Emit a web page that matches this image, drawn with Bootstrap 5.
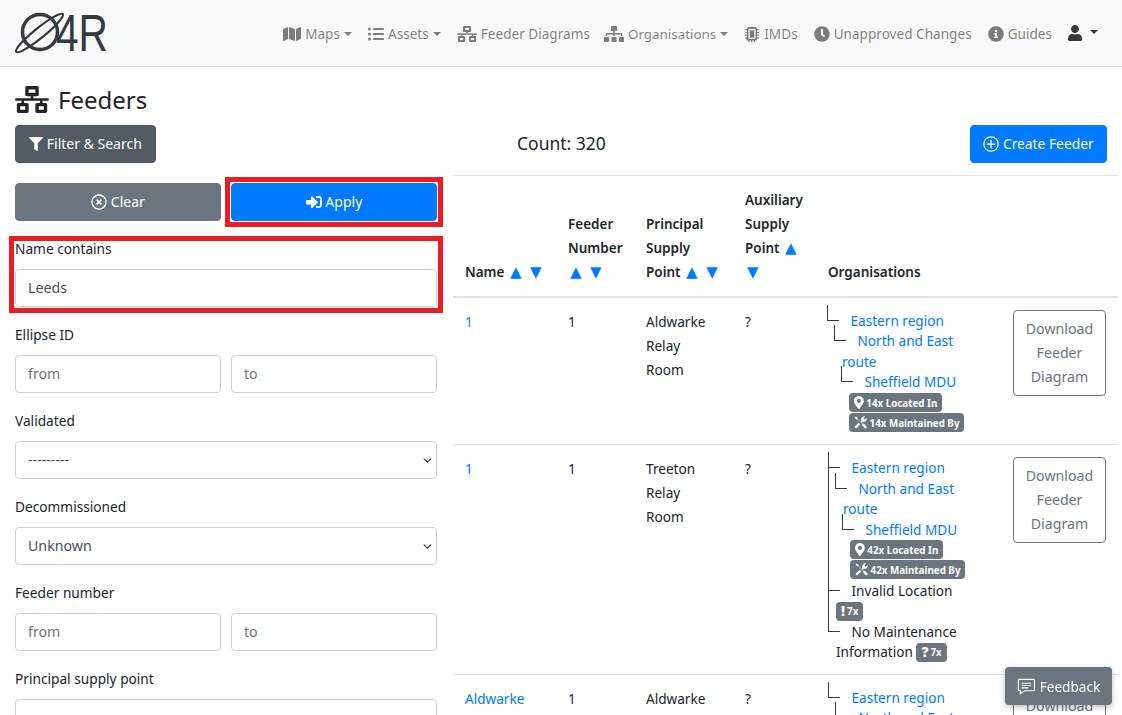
<!DOCTYPE html>
<html lang="en">
<head>
<meta charset="utf-8">
<title>Feeders</title>
<link href="https://cdn.jsdelivr.net/npm/bootstrap@5.3.0/dist/css/bootstrap.min.css" rel="stylesheet">
<style>
html,body{height:100vh;overflow:hidden}
body{font-family:"Noto Sans",sans-serif;font-size:14.4px;line-height:24px;color:#212529}
svg.ic{height:16px;width:auto;fill:currentColor;vertical-align:-3px}
.top-bar{height:67px;background:#f8f9fa;border-bottom:1px solid #dee2e6;padding:0 15px}
.top-link{color:rgba(0,0,0,.5);text-decoration:none;padding:1px 8px 0;white-space:nowrap;display:flex;align-items:center;gap:4px;font-size:13.6px}
.top-link.org-link{font-size:13.4px;padding-left:6px}
.top-link.dropdown-toggle::after{border-top-width:4px;border-left-width:4px;border-right-width:4px;margin-left:0;vertical-align:.255em}
.top-user{color:#343a40;padding:0 9px 0 8px;text-decoration:none;display:flex;align-items:center;gap:8px}
.top-user svg{height:16px;fill:currentColor}
.top-user.dropdown-toggle::after{margin-left:0;border-top-width:4px;border-left-width:4px;border-right-width:4px;margin-bottom:3px}
.page-title{font-size:24px;line-height:29px;font-weight:400;margin:0;padding:18px 15px 11px;gap:9px}
.page-title svg{height:27px;width:34px;fill:#212529}
.side{width:452px;flex:none;padding:0 15px}
.main{flex:1 1 auto;margin-left:1px;padding-right:4px;min-width:0}
.act-btn{height:38px;padding:0;font-size:14px;line-height:36px;border-radius:4px}
.act-dark{background:#545b62;border-color:#4e555b;color:#fff;width:141px}
.act-dark svg.ic{height:14px;vertical-align:-2px}
.act-blue{background:#007bff;border-color:#007bff;color:#fff}
.act-grey{background:#6c757d;border-color:#6c757d;color:#fff}
.act-create{width:137px;margin-right:11px;font-size:13.8px}
.count-text{font-size:17.5px;margin-left:64px;margin-bottom:2px}
.head-line{height:38px;margin-bottom:12px}
.btn-line{gap:10px;margin:20px 0 16px;height:38px}
.btn-line>*{flex:0 0 206px}
.red-wrap{position:relative}
.red-box{position:absolute;border:5px solid #ed1c24;pointer-events:none}
.red-apply{left:-6px;right:-6px;top:-6px;bottom:-6px}
.red-name{left:-6px;right:-6px;top:-1px;bottom:-6px}
.fld{margin-bottom:16px}
.fld label{display:block;margin-bottom:8px;font-size:13.7px}
.fld .form-control,.fld .form-select{height:38px;font-size:14.2px;border-radius:4px;border-color:#ced4da;color:#495057;padding:6px 12px}
.fld .form-control{padding:5px 12px 7px}
.fld .form-select{background-position:right 3px center;background-size:11px 9px}
.fld .form-control::placeholder{color:#6c757d}
.pair{gap:10px}
.feed-table{table-layout:fixed;width:100%;margin:0;border-top:1px solid #dee2e6;font-size:13.6px;line-height:24px}
.feed-table th,.feed-table td{padding:12px;vertical-align:top;border-bottom:1px solid #dee2e6;border-top:0}
.feed-table thead th{vertical-align:bottom;border-bottom:2px solid #dee2e6;font-weight:600;font-size:13.5px}
.feed-table a.nm{color:#007bff;text-decoration:none}
.sort{color:#007bff;font-size:15px;line-height:1;margin-left:2px;font-family:"DejaVu Sans",sans-serif}
.sort.sd{margin-left:5px}
.dl-btn{width:93px;height:86px;padding:6px 0;border:1px solid #6c757d;color:#6c757d;background:#fff;font-size:14.2px;line-height:24px;border-radius:4px;text-align:center}
.org-tree,.org-tree ul{list-style:none;margin:0;padding:0}
.org-tree{padding-left:8px;line-height:20.4px;font-size:13.6px;margin-top:1px}
.org-tree.t1{margin-left:-1px;margin-bottom:-1px}
.org-tree.t2{margin-bottom:-1px}
.org-tree ul{padding-left:7px}
.org-tree li{position:relative}
.org-tree li::before{content:"";position:absolute;left:-8px;top:-6px;width:12px;height:16px;border-left:1px solid #343a40;border-bottom:1px solid #343a40}
.org-tree li.more::after{content:"";position:absolute;left:-8px;top:8px;bottom:-8px;border-left:1px solid #343a40}
.gap-in{display:inline-block;width:15.5px}
.org-tree a{color:#007bff;text-decoration:none}
.tag{display:inline-block;height:19px;margin:-4px 0;background:#6c757d;color:#fff;font-size:9.8px;font-weight:700;line-height:12px;padding:3px 5px 4px;border-radius:4px;white-space:nowrap;vertical-align:1px}
.tag svg{height:13px;width:auto;fill:#fff;vertical-align:-2px}
.tag b{font-size:14px;line-height:12px;vertical-align:-1px;margin-right:2px}
.feed-fix{position:fixed;right:10px;bottom:10px;width:107px;height:38px;padding-top:1px;background:#6c757d;color:#fff;border-radius:4px;box-shadow:0 2px 6px rgba(0,0,0,.25);display:flex;align-items:center;justify-content:center;gap:4px;font-size:13.6px}
.feed-fix svg{height:17px;width:auto;fill:none;stroke:#fff;stroke-width:1.2}
</style>
</head>
<body>
<nav class="top-bar d-flex align-items-center justify-content-between">
  <svg width="92" height="42" viewBox="0 0 92 42" aria-label="O4R logo" role="img">
    <g fill="none" stroke="#343a40">
      <circle cx="25" cy="20" r="17.500" stroke-width="3.500"/>
      <ellipse cx="24.500" cy="21" rx="30" ry="5" transform="rotate(-39 24.500 21)" stroke-width="2.200"/>
    </g>
    <text x="41" y="39" font-family="Liberation Sans" font-size="52" fill="#343a40" textLength="52" lengthAdjust="spacingAndGlyphs">4R</text>
  </svg>
  <div class="d-flex align-items-center">
    <a class="top-link dropdown-toggle" href="#"><svg class="ic" viewBox="0 0 576 512"><path d="M0 117.66v346.32c0 11.32 11.43 19.06 21.94 14.86L160 416V32L20.12 87.95A32.006 32.006 0 0 0 0 117.66zM192 416l192 64V96L192 32v384zM554.06 33.16L416 96v384l139.88-55.95A31.996 31.996 0 0 0 576 394.34V48.02c0-11.32-11.43-19.06-21.94-14.86z"/></svg>Maps</a>
    <a class="top-link dropdown-toggle" href="#"><svg class="ic" viewBox="0 0 512 512"><circle cx="48" cy="96" r="48"/><circle cx="48" cy="256" r="48"/><circle cx="48" cy="416" r="48"/><rect x="160" y="64" width="352" height="64" rx="14"/><rect x="160" y="224" width="352" height="64" rx="14"/><rect x="160" y="384" width="352" height="64" rx="14"/></svg>Assets</a>
    <a class="top-link" href="#"><svg class="ic" viewBox="0 0 640 512"><path d="M640 264v-16c0-8.840-7.160-16-16-16H344v-40h72c17.670 0 32-14.330 32-32V32c0-17.670-14.330-32-32-32H224c-17.670 0-32 14.330-32 32v128c0 17.670 14.330 32 32 32h72v40H16c-8.840 0-16 7.160-16 16v16c0 8.840 7.160 16 16 16h104v40H64c-17.670 0-32 14.330-32 32v128c0 17.670 14.330 32 32 32h160c17.670 0 32-14.330 32-32V352c0-17.670-14.330-32-32-32h-56v-40h304v40h-56c-17.670 0-32 14.330-32 32v128c0 17.670 14.330 32 32 32h160c17.670 0 32-14.330 32-32V352c0-17.670-14.330-32-32-32h-56v-40h104c8.840 0 16-7.160 16-16zM256 128V64h128v64H256zm-64 320H96v-64h96v64zm352 0h-96v-64h96v64z"/></svg>Feeder Diagrams</a>
    <a class="top-link org-link dropdown-toggle" href="#"><svg class="ic" viewBox="0 0 640 512"><path d="M128 352H32c-17.670 0-32 14.330-32 32v96c0 17.670 14.330 32 32 32h96c17.670 0 32-14.330 32-32v-96c0-17.670-14.330-32-32-32zm-24-80h192v48h48v-48h192v48h48v-57.590c0-21.170-17.230-38.410-38.410-38.410H344v-64h40c17.670 0 32-14.330 32-32V32c0-17.670-14.330-32-32-32H256c-17.670 0-32 14.330-32 32v96c0 17.670 14.330 32 32 32h40v64H94.410C73.230 224 56 241.230 56 262.410V320h48v-48zm264 80h-96c-17.670 0-32 14.330-32 32v96c0 17.670 14.330 32 32 32h96c17.670 0 32-14.330 32-32v-96c0-17.670-14.330-32-32-32zm240 0h-96c-17.670 0-32 14.330-32 32v96c0 17.670 14.330 32 32 32h96c17.670 0 32-14.330 32-32v-96c0-17.670-14.330-32-32-32z"/></svg>Organisations</a>
    <a class="top-link" href="#"><svg class="ic" viewBox="0 0 512 512"><path fill-rule="evenodd" d="M144 32h224a48 48 0 0 1 48 48v16h44a12 12 0 0 1 0 40h-44v48h44a12 12 0 0 1 0 40h-44v48h44a12 12 0 0 1 0 40h-44v48h44a12 12 0 0 1 0 40h-44v16a48 48 0 0 1-48 48h-16v44a12 12 0 0 1-40 0v-44h-48v44a12 12 0 0 1-40 0v-44h-48v44a12 12 0 0 1-40 0v-44h-16a48 48 0 0 1-48-48v-16H52a12 12 0 0 1 0-40h44v-48H52a12 12 0 0 1 0-40h44v-48H52a12 12 0 0 1 0-40h44v-48H52a12 12 0 0 1 0-40h44V80a48 48 0 0 1 48-48zm16 64a16 16 0 0 0-16 16v288a16 16 0 0 0 16 16h192a16 16 0 0 0 16-16V112a16 16 0 0 0-16-16zm24 40h144v240H184z"/></svg>IMDs</a>
    <a class="top-link" href="#"><svg class="ic" viewBox="0 0 512 512"><path d="M256,8C119,8,8,119,8,256S119,504,256,504,504,393,504,256,393,8,256,8Zm92.49,313h0l-20,25a16,16,0,0,1-22.49,2.5h0l-67-49.72a40,40,0,0,1-15-31.23V112a16,16,0,0,1,16-16h32a16,16,0,0,1,16,16V256l58,42.5A16,16,0,0,1,348.49,321Z"/></svg>Unapproved Changes</a>
    <a class="top-link" href="#"><svg class="ic" viewBox="0 0 512 512"><path d="M256 8C119.043 8 8 119.083 8 256c0 136.997 111.043 248 248 248s248-111.003 248-248C504 119.083 392.957 8 256 8zm0 110c23.196 0 42 18.804 42 42s-18.804 42-42 42-42-18.804-42-42 18.804-42 42-42zm56 254c0 6.627-5.373 12-12 12h-88c-6.627 0-12-5.373-12-12v-24c0-6.627 5.373-12 12-12h12v-64h-12c-6.627 0-12-5.373-12-12v-24c0-6.627 5.373-12 12-12h64c6.627 0 12 5.373 12 12v100h12c6.627 0 12 5.373 12 12v24z"/></svg>Guides</a>
    <a class="top-user dropdown-toggle" href="#"><svg viewBox="0 0 448 512"><path d="M224 256c70.700 0 128-57.300 128-128S294.700 0 224 0 96 57.300 96 128s57.300 128 128 128zm89.600 32h-16.700c-22.200 10.200-46.900 16-72.900 16s-50.600-5.800-72.900-16h-16.700C60.200 288 0 348.200 0 422.400V464c0 26.500 21.500 48 48 48h352c26.500 0 48-21.500 48-48v-41.600c0-74.200-60.200-134.400-134.400-134.400z"/></svg></a>
  </div>
</nav>

<h1 class="page-title d-flex align-items-center"><svg viewBox="0 0 640 512"><path d="M640 264v-16c0-8.840-7.160-16-16-16H344v-40h72c17.670 0 32-14.330 32-32V32c0-17.670-14.330-32-32-32H224c-17.670 0-32 14.330-32 32v128c0 17.670 14.330 32 32 32h72v40H16c-8.840 0-16 7.160-16 16v16c0 8.840 7.160 16 16 16h104v40H64c-17.670 0-32 14.330-32 32v128c0 17.670 14.330 32 32 32h160c17.670 0 32-14.330 32-32V352c0-17.670-14.330-32-32-32h-56v-40h304v40h-56c-17.670 0-32 14.330-32 32v128c0 17.670 14.330 32 32 32h160c17.670 0 32-14.330 32-32V352c0-17.670-14.330-32-32-32h-56v-40h104c8.840 0 16-7.160 16-16zM256 128V64h128v64H256zm-64 320H96v-64h96v64zm352 0h-96v-64h96v64z"/></svg>Feeders</h1>

<div class="d-flex">
  <aside class="side">
    <button class="btn act-btn act-dark d-block" type="button"><svg class="ic" viewBox="0 0 512 512"><path d="M487.976 0H24.028C2.710 0-8.047 25.866 7.058 40.971L192 225.941V432c0 7.831 3.821 15.170 10.237 19.662l80 55.980C298.020 518.690 320 507.493 320 487.980V225.941l184.947-184.970C520.021 25.896 509.338 0 487.976 0z"/></svg> Filter &amp; Search</button>
    <div class="d-flex btn-line">
      <button class="btn act-btn act-grey" type="button"><svg class="ic" viewBox="0 0 512 512"><circle cx="256" cy="256" r="226" fill="none" stroke="currentColor" stroke-width="44"/><path d="M180 180l152 152M332 180L180 332" stroke="currentColor" stroke-width="56" fill="none"/></svg> Clear</button>
      <div class="red-wrap d-flex">
        <button class="btn act-btn act-blue w-100" type="button"><svg class="ic" viewBox="0 0 512 512"><path d="M416 448h-84c-6.600 0-12-5.400-12-12v-40c0-6.600 5.400-12 12-12h84c17.700 0 32-14.300 32-32V160c0-17.700-14.300-32-32-32h-84c-6.600 0-12-5.400-12-12V76c0-6.600 5.400-12 12-12h84c53 0 96 43 96 96v192c0 53-43 96-96 96zm-47-201L201 79c-15-15-41-4.500-41 17v96H24c-13.300 0-24 10.700-24 24v96c0 13.300 10.700 24 24 24h136v96c0 21.500 26 32 41 17l168-168c9.300-9.400 9.300-24.600 0-34z"/></svg> Apply</button>
        <span class="red-box red-apply"></span>
      </div>
    </div>
    <div class="fld red-wrap">
      <label for="f1">Name contains</label>
      <input id="f1" class="form-control" value="Leeds">
      <span class="red-box red-name"></span>
    </div>
    <div class="fld">
      <label>Ellipse ID</label>
      <div class="d-flex pair"><input class="form-control" placeholder="from"><input class="form-control" placeholder="to"></div>
    </div>
    <div class="fld">
      <label>Validated</label>
      <select class="form-select"><option>---------</option></select>
    </div>
    <div class="fld">
      <label>Decommissioned</label>
      <select class="form-select"><option>Unknown</option></select>
    </div>
    <div class="fld">
      <label>Feeder number</label>
      <div class="d-flex pair"><input class="form-control" placeholder="from"><input class="form-control" placeholder="to"></div>
    </div>
    <div class="fld">
      <label>Principal supply point</label>
      <input class="form-control">
    </div>
  </aside>
  <main class="main">
    <div class="d-flex align-items-center justify-content-between head-line">
      <div class="count-text">Count: 320</div>
      <button class="btn act-btn act-blue act-create" type="button"><svg class="ic" viewBox="0 0 512 512"><circle cx="256" cy="256" r="230" fill="none" stroke="currentColor" stroke-width="40"/><path d="M256 120v272M120 256h272" stroke="currentColor" stroke-width="40" fill="none"/></svg> Create Feeder</button>
    </div>
    <table class="feed-table">
      <colgroup><col style="width:103px"><col style="width:78px"><col style="width:99px"><col style="width:83px"><col style="width:185px"><col style="width:117px"></colgroup>
      <thead><tr>
        <th>Name <span class="sort">▲</span> <span class="sort sd">▼</span></th>
        <th>Feeder Number <span class="sort">▲</span> <span class="sort sd">▼</span></th>
        <th>Principal Supply Point <span class="sort">▲</span> <span class="sort sd">▼</span></th>
        <th>Auxiliary Supply Point <span class="sort">▲</span> <span class="sort">▼</span></th>
        <th>Organisations</th>
        <th></th>
      </tr></thead>
      <tbody>
      <tr>
        <td><a class="nm" href="#">1</a></td><td>1</td><td>Aldwarke Relay Room</td><td>?</td>
        <td>
          <ul class="org-tree t1">
            <li><span class="gap-in"></span><a href="#">Eastern region</a>
              <ul><li><span class="gap-in"></span><a href="#">North and East route</a>
                <ul><li><span class="gap-in"></span><a href="#">Sheffield MDU</a><br>
                  <span class="tag"><svg viewBox="0 0 384 512"><path d="M172.268 501.670C26.970 291.031 0 268.413 0 192 0 85.961 85.961 0 192 0s192 85.961 192 192c0 76.413-26.970 99.031-172.268 309.670-9.535 13.774-29.930 13.773-39.464 0zM192 272c44.183 0 80-35.817 80-80s-35.817-80-80-80-80 35.817-80 80 35.817 80 80 80z"/></svg> 14x Located In</span><br>
                  <span class="tag"><svg viewBox="0 0 512 512"><path d="M20 70L70 20l80 60v50l180 180 60-5 100 100a50 50 0 0 1-70 70L320 375l5-60-180-180H90zM290 170a120 120 0 0 1 150-150l-65 65 10 45 45 10 65-65a120 120 0 0 1-150 150l-40 40-55-55zM190 270l55 55L110 470a50 50 0 0 1-70-70z"/></svg> 14x Maintained By</span>
                </li></ul>
              </li></ul>
            </li>
          </ul>
        </td>
        <td><button class="dl-btn" type="button">Download Feeder Diagram</button></td>
      </tr>
      <tr>
        <td><a class="nm" href="#">1</a></td><td>1</td><td>Treeton Relay Room</td><td>?</td>
        <td>
          <ul class="org-tree t2">
            <li class="more"><span class="gap-in"></span><a href="#">Eastern region</a>
              <ul><li><span class="gap-in"></span><a href="#">North and East route</a>
                <ul><li><span class="gap-in"></span><a href="#">Sheffield MDU</a><br>
                  <span class="tag"><svg viewBox="0 0 384 512"><path d="M172.268 501.670C26.970 291.031 0 268.413 0 192 0 85.961 85.961 0 192 0s192 85.961 192 192c0 76.413-26.970 99.031-172.268 309.670-9.535 13.774-29.930 13.773-39.464 0zM192 272c44.183 0 80-35.817 80-80s-35.817-80-80-80-80 35.817-80 80 35.817 80 80 80z"/></svg> 42x Located In</span><br>
                  <span class="tag"><svg viewBox="0 0 512 512"><path d="M20 70L70 20l80 60v50l180 180 60-5 100 100a50 50 0 0 1-70 70L320 375l5-60-180-180H90zM290 170a120 120 0 0 1 150-150l-65 65 10 45 45 10 65-65a120 120 0 0 1-150 150l-40 40-55-55zM190 270l55 55L110 470a50 50 0 0 1-70-70z"/></svg> 42x Maintained By</span>
                </li></ul>
              </li></ul>
            </li>
            <li class="more"><span class="gap-in"></span>Invalid Location<br><span class="tag"><b>!</b>7x</span></li>
            <li><span class="gap-in"></span>No Maintenance Information <span class="tag"><b>?</b>7x</span></li>
          </ul>
        </td>
        <td><button class="dl-btn" type="button">Download Feeder Diagram</button></td>
      </tr>
      <tr>
        <td><a class="nm" href="#">Aldwarke</a></td><td>1</td><td>Aldwarke Relay Room</td><td>?</td>
        <td>
          <ul class="org-tree">
            <li><span class="gap-in"></span><a href="#">Eastern region</a>
              <ul><li><span class="gap-in"></span><a href="#">North and East route</a></li></ul>
            </li>
          </ul>
        </td>
        <td><button class="dl-btn" type="button">Download Feeder Diagram</button></td>
      </tr>
      </tbody>
    </table>
  </main>
</div>
<div class="feed-fix"><svg viewBox="0 0 20 18"><path d="M2.500 1.500h15a1 1 0 0 1 1 1v10a1 1 0 0 1-1 1H8l-4.500 3v-3h-1a1 1 0 0 1-1-1v-10a1 1 0 0 1 1-1zM5 5.500h10M5 8h10M5 10.500h7"/></svg>Feedback</div>
<script src="https://cdn.jsdelivr.net/npm/bootstrap@5.3.0/dist/js/bootstrap.bundle.min.js"></script>
</body>
</html>
